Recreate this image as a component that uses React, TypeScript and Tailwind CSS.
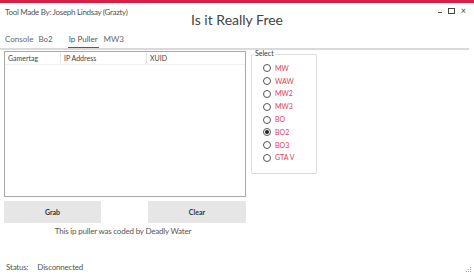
import React from "react";

const games = ["MW", "WAW", "MW2", "MW3", "BO", "BO2", "BO3", "GTA V"];

function Radio({ label, checked }: { label: string; checked?: boolean }) {
  return (
    <div className="flex items-center h-[12.8px]">
      <span className="w-[8px] h-[8px] rounded-full border border-[#555] flex items-center justify-center bg-white">
        {checked && <span className="w-[4px] h-[4px] rounded-full bg-[#222]" />}
      </span>
      <span className="ml-[4px] text-[7px] text-[#e23b4f] leading-none">{label}</span>
    </div>
  );
}

export default function App() {
  return (
    <div
      className="w-[474px] h-[275px] bg-white relative overflow-hidden text-[#333]"
      style={{ fontFamily: 'Lato, "Noto Sans", sans-serif' }}
    >
      <div className="h-[3px] bg-[#d81e45]" />

      {/* title bar */}
      <div className="relative h-[28px]">
        <div className="absolute left-[5px] top-[5px] text-[8px] tracking-[-0.3px] text-[#555] leading-none">
          Tool Made By: Joseph Lindsay (Grazty)
        </div>
        <div className="absolute left-0 right-0 top-[10px] text-center text-[14px] text-[#444] leading-none">
          Is it Really Free
        </div>
        <div className="absolute right-[8px] top-[3px] flex items-center gap-[6px] text-[#444]">
          <span className="w-[4px] h-[1px] bg-[#444] mt-[4px]" />
          <span className="w-[7px] h-[6px] border border-[#444]" />
          <span className="text-[9px] leading-none">×</span>
        </div>
      </div>

      {/* tabs */}
      <div className="flex items-end h-[17px] pl-[5px] text-[8px] text-[#666]">
        <span className="pb-[3px]">Console</span>
        <span className="ml-[5px] pb-[3px]">Bo2</span>
        <span className="ml-[15px] px-[1px] pb-[2px] text-[#555] border-b-[1.5px] border-[#d81e45]">Ip Puller</span>
        <span className="ml-[5px] pb-[3px]">MW3</span>
      </div>
      <div className="h-[2px] w-[469px] bg-[#dadada]" />

      {/* main */}
      <div className="flex mt-[1px] ml-[4px]">
        <div className="w-[242px] h-[146px] border border-[#a8a8a8] text-[7px] text-[#444]">
          <div className="flex h-[13px] items-center border-b border-[#f0f0f0]">
            <span className="w-[56px] pl-[3px] border-r border-[#e5e5e5]">Gamertag</span>
            <span className="w-[86px] pl-[3px] border-r border-[#e5e5e5]">IP Address</span>
            <span className="pl-[3px]">XUID</span>
          </div>
        </div>

        <div className="relative ml-[5px] mt-[3px] w-[66px] h-[120px] border border-[#dcdcdc] rounded-[2px]">
          <span className="absolute left-[2px] top-[-5px] bg-white px-[1px] text-[7px] leading-none text-[#333]">
            Select
          </span>
          <div className="pt-[7px] pl-[11px] flex flex-col">
            {games.map((g) => (
              <Radio key={g} label={g} checked={g === "BO2"} />
            ))}
          </div>
        </div>
      </div>

      {/* buttons */}
      <div className="flex ml-[4px] mt-[4px] w-[242px] justify-between">
        <button className="w-[97px] h-[22px] bg-[#e6e6e6] text-[7px] font-bold text-[#333]">Grab</button>
        <button className="w-[98px] h-[22px] bg-[#e6e6e6] text-[7px] font-bold text-[#333]">Clear</button>
      </div>
      <div className="w-[246px] text-center text-[8px] tracking-[-0.2px] text-[#555] mt-[4px] leading-none">
        This ip puller was coded by Deadly Water
      </div>

      {/* status */}
      <div className="absolute left-[6px] bottom-[4px] flex text-[8px] tracking-[-0.2px] text-[#555] leading-none">
        <span>Status:</span>
        <span className="ml-[9px]">Disconnected</span>
      </div>
      <div className="absolute right-[3px] bottom-[3px] grid grid-cols-3 gap-[1px]">
        <span />
        <span />
        <span className="w-[1px] h-[1px] bg-[#aaa]" />
        <span />
        <span className="w-[1px] h-[1px] bg-[#aaa]" />
        <span className="w-[1px] h-[1px] bg-[#aaa]" />
        <span className="w-[1px] h-[1px] bg-[#aaa]" />
        <span className="w-[1px] h-[1px] bg-[#aaa]" />
        <span className="w-[1px] h-[1px] bg-[#aaa]" />
      </div>
    </div>
  );
}
